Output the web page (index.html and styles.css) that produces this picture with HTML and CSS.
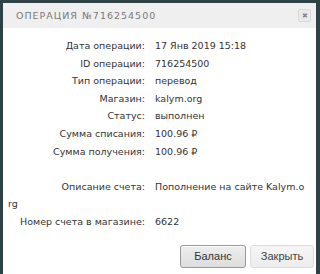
FILE: index.html
```html
<!DOCTYPE html>
<html lang="ru">
<head>
    <meta charset="UTF-8">
    <title>Операция №716254500</title>
    <link rel="stylesheet" href="styles.css">
</head>
<body>
    <div class="dialog">
        <div class="dialog-head">
            <span class="dialog-title">Операция №716254500</span>
            <button class="close">&#10006;</button>
        </div>
        <div class="dialog-body">
            <div class="row"><span class="label">Дата операции:</span>17 Янв 2019 15:18</div>
            <div class="row"><span class="label">ID операции:</span>716254500</div>
            <div class="row"><span class="label">Тип операции:</span>перевод</div>
            <div class="row"><span class="label">Магазин:</span>kalym.org</div>
            <div class="row"><span class="label">Статус:</span>выполнен</div>
            <div class="row"><span class="label">Сумма списания:</span>100.96 &#8381;</div>
            <div class="row"><span class="label">Сумма получения:</span>100.96 &#8381;</div>
            <div class="row empty"></div>
            <div class="row"><span class="label">Описание счета:</span>Пополнение на сайте Kalym.org</div>
            <div class="row"><span class="label">Номер счета в магазине:</span>6622</div>
        </div>
        <div class="dialog-foot">
            <button class="btn btn-main">Баланс</button>
            <button class="btn">Закрыть</button>
        </div>
    </div>
</body>
</html>
```

FILE: styles.css
```css
body {
    margin: 0;
    padding: 3px 0 0 3px;
    width: 320px;
    height: 274px;
    box-sizing: border-box;
    overflow: hidden;
    background-color: #2e4246;
    font-family: "DejaVu Sans", sans-serif;
}

.dialog {
    width: 313px;
    height: 280px;
    background-color: #fff;
}

.dialog-head {
    height: 25px;
    display: flex;
    align-items: center;
    justify-content: space-between;
    padding: 0 5px 0 13px;
    background-color: #efefef;
}

.dialog-title {
    font-size: 9.5px;
    letter-spacing: 1px;
    text-transform: uppercase;
    color: #7a7a7a;
}

.close {
    width: 13px;
    height: 13px;
    padding: 0;
    font-size: 7px;
    line-height: 11px;
    color: #888;
    background-color: #eaeaea;
    border: 1px solid #d8d8d8;
    border-radius: 2px;
}

.dialog-body {
    padding: 9px 11px 0 5px;
    font-size: 9.5px;
    color: #333;
}

.row {
    line-height: 17.6px;
    word-break: break-all;
}

.row.empty {
    height: 17.6px;
}

.label {
    display: inline-block;
    width: 137px;
    margin-right: 10px;
    text-align: right;
    word-break: normal;
}

.dialog-foot {
    display: flex;
    justify-content: flex-end;
    gap: 4px;
    padding: 14px 2px 0 0;
}

.btn {
    width: 64px;
    height: 23px;
    font-family: "Liberation Sans", Arial, sans-serif;
    font-size: 11px;
    color: #444;
    background: linear-gradient(#f6f6f6, #ececec);
    border: 1px solid #dcdcdc;
    border-radius: 3px;
}

.btn-main {
    width: 66px;
    color: #333;
    background: linear-gradient(#eeeeee, #dddddd);
    border-color: #999;
    box-shadow: inset 0 1px 0 #fff;
}
```
